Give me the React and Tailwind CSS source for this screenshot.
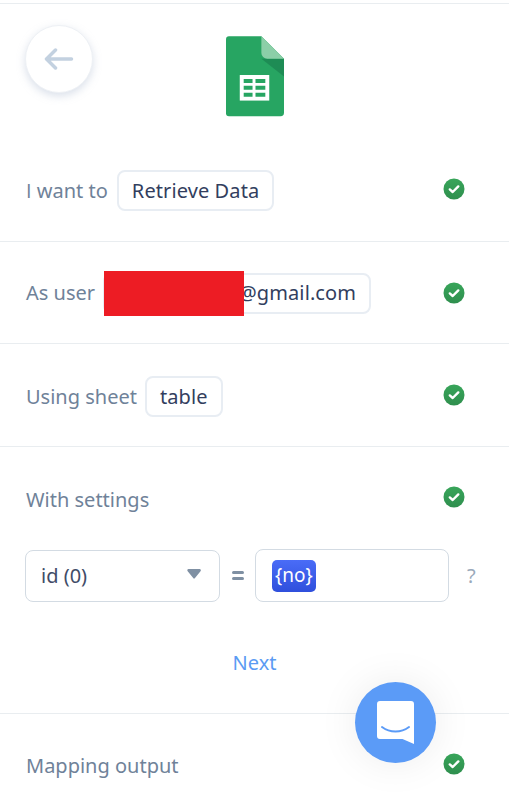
import React from 'react';

const Check = ({ className = '' }) => (
  <svg width="22" height="22" viewBox="0 0 22 22" className={`shrink-0 ${className}`}>
    <defs>
      <linearGradient id="chk" x1="0" y1="0" x2="0" y2="1">
        <stop offset="0" stopColor="#38a55a" />
        <stop offset="1" stopColor="#2f8f4e" />
      </linearGradient>
    </defs>
    <circle cx="11" cy="11" r="10.5" fill="url(#chk)" />
    <path d="M6.800 11.400l2.900 2.600 5.600-5.600" fill="none" stroke="#fff" strokeWidth="2.400" strokeLinecap="round" strokeLinejoin="round" />
  </svg>
);

const Chip = ({ children, className = '' }) => (
  <span className={`h-[41px] flex items-center px-[13px] bg-white border-2 border-[#e8edf3] rounded-lg text-[#323e5e] text-[20px] tracking-[0.1px] whitespace-nowrap ${className}`}>
    {children}
  </span>
);

const Row = ({ label, children, className, checkClass }) => (
  <div className={`flex items-center justify-between pl-[26px] pr-[44px] border-b border-[#e9edf0] ${className}`}>
    <div className="flex items-center gap-[8px]">
      <span className="text-[#6f8299] text-[20px] whitespace-nowrap">{label}</span>
      {children}
    </div>
    <Check className={checkClass} />
  </div>
);

const SheetsLogo = () => (
  <svg width="58" height="81" viewBox="0 0 59 82">
    <path d="M3 0h33l23 23v55a3.500 3.500 0 0 1-3.500 3.500h-52.500a3 3 0 0 1-3-3v-75.500a3 3 0 0 1 3-3z" fill="#27a562" />
    <path d="M36 23l23 18v-18z" fill="#1e8c55" />
    <path d="M36 0l23 23h-17a6 6 0 0 1-6-6z" fill="#8ccfa8" />
    <path d="M14 39.500h30v26h-30z" fill="#fff" />
    <path d="M18 43.500h9v4h-9zM30 43.500h10v4h-10zM18 50.500h9v4h-9zM30 50.500h10v4h-10zM18 57.500h9v4h-9zM30 57.500h10v4h-10z" fill="#27a562" />
  </svg>
);

export default function App() {
  return (
    <div className="relative h-[801px] w-[509px] overflow-hidden bg-white font-['Noto_Sans','Open_Sans',sans-serif]">
      <div className="pt-[3px]">
        <div className="border-t border-[#e9edf0]" />

        {/* header */}
        <div className="relative h-[128px] flex justify-center pt-[32px] pl-[1px]">
          <button className="absolute left-[25px] top-[21px] w-[68px] h-[68px] rounded-full bg-white border border-[#eef1f5] shadow-[0_3px_8px_rgba(150,165,195,0.35)] flex items-center justify-center">
            <svg width="30" height="22" viewBox="0 0 30 22" fill="none" stroke="#c3d1e0" strokeWidth="3.500" strokeLinecap="round" strokeLinejoin="round">
              <path d="M27.500 11h-24M11.500 2l-9 9 9 9" />
            </svg>
          </button>
          <SheetsLogo />
        </div>

        <Row
          label={<><span className="font-['Open_Sans',sans-serif]">I</span> want to</>}
          className="h-[110px] pt-[8px]"
          checkClass="mb-[4px]"
        >
          <Chip className="ml-[1px]">Retrieve Data</Chip>
        </Row>

        <Row label="As user" className="h-[102px] pt-[1px]" checkClass="mb-[1px]">
          {/* username sits behind the red box */}
          <Chip className="w-[268px] justify-end">@gmail.com</Chip>
        </Row>

        <Row label="Using sheet" className="h-[103px] pt-[3px]" checkClass="mb-[3px]">
          <Chip>table</Chip>
        </Row>

        {/* settings */}
        <div className="border-b border-[#e9edf0] h-[267px] pl-[25px] pr-[32px] pt-[37px]">
          <div className="flex items-center justify-between pr-[12px] pl-[1px]">
            <span className="text-[#6f8299] text-[20px] translate-y-[1px]">With settings</span>
            <Check className="mb-[4px]" />
          </div>
          <div className="flex items-center mt-[35px]">
            <div className="w-[195px] h-[52px] flex items-center justify-between pl-[15px] pr-[18px] border border-[#d3dbe3] rounded-lg text-[#414c68] text-[20px]">
              <span>id (0)</span>
              <svg width="14" height="10" viewBox="0 0 14 10" className="mb-[3px]">
                <path d="M1.500 0h11a1.300 1.300 0 0 1 1 2.200l-5.500 6.800a1 1 0 0 1-1.800 0l-5.500-6.800a1.300 1.300 0 0 1 .8-2.200z" fill="#7f90a3" />
              </svg>
            </div>
            <div className="w-[35px] flex flex-col items-center gap-[3px] mb-[1px]">
              <span className="w-[12px] h-[3px] bg-[#7f90a3] rounded-sm" />
              <span className="w-[12px] h-[3px] bg-[#7f90a3] rounded-sm" />
            </div>
            <div className="w-[194px] h-[53px] flex items-center pl-[16px] border border-[#d3dbe3] rounded-lg">
              <span className="h-[32px] px-[3px] flex items-center rounded-[5px] bg-gradient-to-b from-[#4a6cf7] to-[#2f4fdc] text-white text-[19px]">{'{no}'}</span>
            </div>
            <span className="ml-[18px] text-[#9aa9ba] text-[20px]">?</span>
          </div>
          <div className="text-center text-[#5b9bf3] text-[20px] mt-[46px] pl-[7px]">Next</div>
        </div>

        <div className="flex items-center justify-between pl-[26px] pr-[44px] pt-[36px]">
          <span className="text-[#6f8299] text-[20px] translate-y-[1px]">Mapping output</span>
          <Check className="mb-[2px]" />
        </div>
      </div>

      {/* redacted box drawn over the email chip */}
      <div className="absolute left-[104px] top-[271px] w-[140px] h-[45px] bg-[#ed1c24]" />

      {/* chat launcher */}
      <div className="absolute left-[355px] top-[682px] w-[81px] h-[81px] rounded-full bg-[#5b9bf7] shadow-[0_0_40px_rgba(0,0,0,0.08)] flex items-center justify-center">
        <svg width="38" height="43" viewBox="0 0 38 43">
          <path d="M3 0h31a3 3 0 0 1 3 3v40l-11.500-5h-22.500a3 3 0 0 1-3-3v-32a3 3 0 0 1 3-3z" fill="#fff" />
          <path d="M5 26c8 6 19 6 27 0" fill="none" stroke="#5b9bf7" strokeWidth="2" strokeLinecap="round" />
        </svg>
      </div>
    </div>
  );
}
